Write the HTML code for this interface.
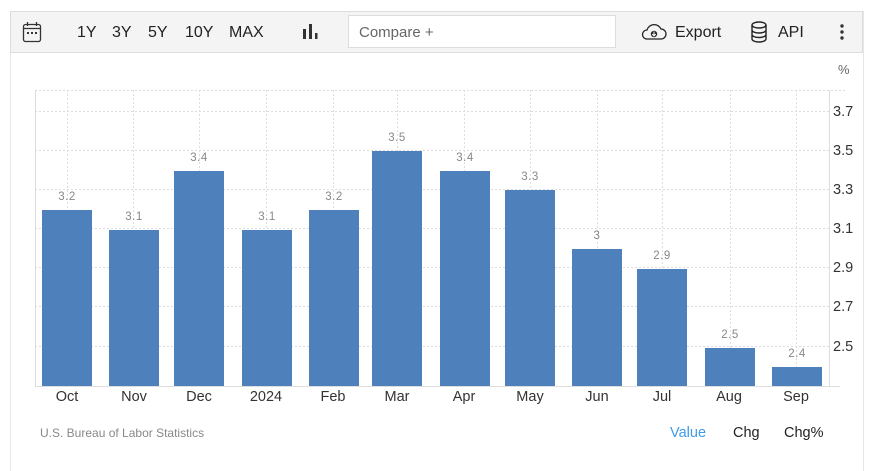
<!DOCTYPE html>
<html><head><meta charset="utf-8"><style>
body{margin:0;width:870px;height:459px;background:#fff;font-family:"Liberation Sans",sans-serif;position:relative;overflow:hidden}
.panel{position:absolute;left:10px;top:11px;width:852px;height:460px;border-left:1px solid #e6e6e6;border-right:1px solid #e6e6e6}
.bar{position:absolute;left:10px;top:11px;width:851px;height:40px;background:#f4f4f4;border:1px solid #ddd;}
.t{position:absolute;font-size:16px;color:#222;top:24px}
.cmp{position:absolute;left:348px;top:15px;width:268px;height:33px;background:#fff;border:1px solid #ddd;box-sizing:border-box;font-size:15px;color:#666;padding:8px 10px}
</style></head><body>
<div class="panel"></div>
<div class="bar"></div>
<svg style="position:absolute;left:22px;top:21px" width="20" height="22" viewBox="0 0 20 22"><rect x="1.5" y="3.5" width="17" height="17" rx="2" fill="none" stroke="#333" stroke-width="1.3"/><line x1="1.5" y1="7.5" x2="18.5" y2="7.5" stroke="#333" stroke-width="1.3"/><line x1="5.5" y1="1" x2="5.5" y2="5" stroke="#333" stroke-width="1.3"/><line x1="14.5" y1="1" x2="14.5" y2="5" stroke="#333" stroke-width="1.3"/><rect x="5" y="11" width="2" height="2" fill="#333"/><rect x="9" y="11" width="2" height="2" fill="#333"/><rect x="13" y="11" width="2" height="2" fill="#333"/></svg>
<div class="t" style="left:77px">1Y</div>
<div class="t" style="left:112px">3Y</div>
<div class="t" style="left:148px">5Y</div>
<div class="t" style="left:185px">10Y</div>
<div class="t" style="left:229px">MAX</div>
<svg style="position:absolute;left:302px;top:23px" width="16" height="17"><rect x="1" y="6" width="3" height="10" fill="#333"/><rect x="7" y="1" width="3" height="15" fill="#333"/><rect x="13" y="10" width="2.5" height="6" fill="#333"/></svg>
<div class="cmp">Compare +</div>
<svg style="position:absolute;left:641px;top:22px" width="26" height="20" viewBox="0 0 26 20"><path d="M6 17 H20 A5 5 0 0 0 20 7 A7.5 7.5 0 0 0 6 8 A4.5 4.5 0 0 0 6 17 Z" fill="none" stroke="#222" stroke-width="1.3"/><circle cx="13" cy="12" r="3.2" fill="#222"/><path d="M13 9.5 V13.5 M11.2 12 L13 14 L14.8 12" stroke="#fff" stroke-width="1" fill="none"/></svg>
<div class="t" style="left:675px">Export</div>
<svg style="position:absolute;left:750px;top:21px" width="18" height="22" viewBox="0 0 18 22"><ellipse cx="9" cy="4" rx="7" ry="3" fill="none" stroke="#222" stroke-width="1.4"/><path d="M2 4 V18 A7 3 0 0 0 16 18 V4 M2 9 A7 3 0 0 0 16 9 M2 13.5 A7 3 0 0 0 16 13.5" fill="none" stroke="#222" stroke-width="1.4"/></svg>
<div class="t" style="left:778px">API</div>
<svg style="position:absolute;left:839px;top:23px" width="6" height="18"><circle cx="3" cy="3" r="1.7" fill="#333"/><circle cx="3" cy="9" r="1.7" fill="#333"/><circle cx="3" cy="15" r="1.7" fill="#333"/></svg>
<div style="position:absolute;left:838px;top:62px;font-size:13px;color:#666">%</div>
<svg style="position:absolute;left:0;top:0" width="870" height="459" font-family="Liberation Sans, sans-serif">
<g stroke="#ddd" stroke-dasharray="2,2" stroke-width="1">
<line x1="35" y1="90.5" x2="846" y2="90.5"/>
<line x1="35" y1="111.5" x2="829" y2="111.5"/>
<line x1="35" y1="150.5" x2="829" y2="150.5"/>
<line x1="35" y1="189.5" x2="829" y2="189.5"/>
<line x1="35" y1="228.5" x2="829" y2="228.5"/>
<line x1="35" y1="267.5" x2="829" y2="267.5"/>
<line x1="35" y1="306.5" x2="829" y2="306.5"/>
<line x1="35" y1="346.5" x2="829" y2="346.5"/>
<line x1="67.5" y1="90" x2="67.5" y2="386"/><line x1="133.5" y1="90" x2="133.5" y2="386"/><line x1="199.5" y1="90" x2="199.5" y2="386"/><line x1="266.5" y1="90" x2="266.5" y2="386"/><line x1="333.5" y1="90" x2="333.5" y2="386"/><line x1="397.5" y1="90" x2="397.5" y2="386"/><line x1="464.5" y1="90" x2="464.5" y2="386"/><line x1="530.5" y1="90" x2="530.5" y2="386"/><line x1="597.5" y1="90" x2="597.5" y2="386"/><line x1="662.5" y1="90" x2="662.5" y2="386"/><line x1="730.5" y1="90" x2="730.5" y2="386"/><line x1="796.5" y1="90" x2="796.5" y2="386"/>
</g>
<line x1="35.5" y1="90" x2="35.5" y2="386" stroke="#ddd"/>
<line x1="829.5" y1="90" x2="829.5" y2="386" stroke="#ddd"/>
<line x1="35" y1="386.5" x2="840" y2="386.5" stroke="#ddd"/>
<g fill="#4e81bc">
<rect x="42" y="210" width="50" height="176"/>
<rect x="109" y="230" width="50" height="156"/>
<rect x="174" y="171" width="50" height="215"/>
<rect x="242" y="230" width="50" height="156"/>
<rect x="309" y="210" width="50" height="176"/>
<rect x="372" y="151" width="50" height="235"/>
<rect x="440" y="171" width="50" height="215"/>
<rect x="505" y="190" width="50" height="196"/>
<rect x="572" y="249" width="50" height="137"/>
<rect x="637" y="269" width="50" height="117"/>
<rect x="705" y="348" width="50" height="38"/>
<rect x="772" y="367" width="50" height="19"/>
</g>
<g fill="#888" font-size="11.5" text-anchor="middle" letter-spacing="0.5">
<text x="67" y="200">3.2</text><text x="134" y="220">3.1</text><text x="199" y="161">3.4</text><text x="267" y="220">3.1</text><text x="334" y="200">3.2</text><text x="397" y="141">3.5</text><text x="465" y="161">3.4</text><text x="530" y="180">3.3</text><text x="597" y="239">3</text><text x="662" y="259">2.9</text><text x="730" y="338">2.5</text><text x="797" y="357">2.4</text>
</g>
<g fill="#333" font-size="14.5" text-anchor="middle">
<text x="67" y="401">Oct</text><text x="134" y="401">Nov</text><text x="199" y="401">Dec</text><text x="266" y="401">2024</text><text x="333" y="401">Feb</text><text x="397" y="401">Mar</text><text x="464" y="401">Apr</text><text x="530" y="401">May</text><text x="597" y="401">Jun</text><text x="662" y="401">Jul</text><text x="729" y="401">Aug</text><text x="796" y="401">Sep</text>
</g>
<g fill="#333" font-size="14.5">
<text x="833" y="116">3.7</text><text x="833" y="155">3.5</text><text x="833" y="194">3.3</text><text x="833" y="233">3.1</text><text x="833" y="272">2.9</text><text x="833" y="311">2.7</text><text x="833" y="351">2.5</text>
</g>
<text x="40" y="437" font-size="12" fill="#888">U.S. Bureau of Labor Statistics</text>
<text x="670" y="437" font-size="14.5" fill="#3d9be9">Value</text>
<text x="733" y="437" font-size="14.5" fill="#222">Chg</text>
<text x="784" y="437" font-size="14.5" fill="#222">Chg%</text>
</svg>
</body></html>
